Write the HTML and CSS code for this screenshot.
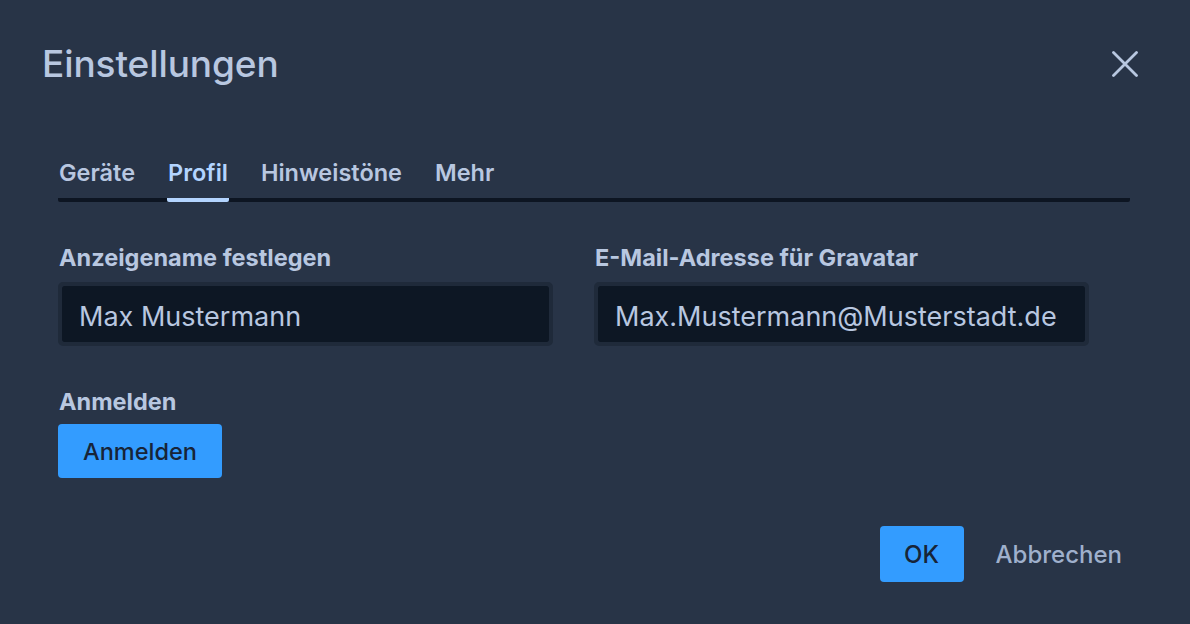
FILE: index.html
```html
<!DOCTYPE html>
<html>
  <head>
    <title>Einstellungen</title>
    <link rel="stylesheet" href="styles.css">
  </head>
  <body>
    <div class="dialog">
      <div class="dialogHeader">
        <h1 class="dialogTitle">Einstellungen</h1>
        <button class="closeButton" aria-label="Schließen">
          <svg width="26" height="26" viewBox="0 0 26 26">
            <path d="M1.5 1.5 L24.5 24.5 M24.5 1.5 L1.5 24.5" stroke="#b8c7e0" stroke-width="2.8" stroke-linecap="round" fill="none"/>
          </svg>
        </button>
      </div>

      <div class="dialogBody">
        <div class="tabs">
          <span class="tab">Geräte</span>
          <span class="tab active">Profil</span>
          <span class="tab">Hinweistöne</span>
          <span class="tab">Mehr</span>
        </div>

        <div class="fields">
          <div class="field">
            <label class="fieldLabel">Anzeigename festlegen</label>
            <div class="inputWrap">
              <input class="textInput" type="text" value="Max Mustermann">
            </div>
          </div>
          <div class="field">
            <label class="fieldLabel">E-Mail-Adresse für Gravatar</label>
            <div class="inputWrap">
              <input class="textInput" type="text" value="Max.Mustermann@Musterstadt.de">
            </div>
          </div>
        </div>

        <div class="loginSection">
          <p class="fieldLabel">Anmelden</p>
          <button class="primaryButton loginButton">Anmelden</button>
        </div>
      </div>

      <div class="dialogFooter">
        <button class="primaryButton okButton">OK</button>
        <button class="subtleButton">Abbrechen</button>
      </div>
    </div>
  </body>
</html>
```

FILE: styles.css
```css
:root {
  --background: rgb(40,52,71);
  --inputbackground: rgb(13,23,36);
  --inputborder: rgb(31,42,58);
  --tabline: rgb(13,21,34);

  --textcolor: rgb(184,199,224);
  --activecolor: rgb(179,212,255);
  --subtlecolor: rgb(159,176,204);

  --buttoncolor: rgb(51,156,255);
  --buttontext: rgb(23,36,56);
}

* {
  box-sizing: border-box;
  font-family: Inter, "Noto Sans", sans-serif;
}

body {
  margin: 0;
  background: var(--background);
  color: var(--textcolor);
}

.dialog {
  width: 1190px;
  height: 624px;
  display: flex;
  flex-direction: column;
}

.dialogHeader {
  display: flex;
  justify-content: space-between;
  align-items: center;
  padding: 38px 52px 0 42px;
}

.dialogTitle {
  margin: 0;
  font-size: 37px;
  font-weight: 500;
  line-height: 52px;
  letter-spacing: -0.1px;
}

.closeButton {
  background: none;
  border: none;
  padding: 0;
  width: 26px;
  height: 26px;
  cursor: pointer;
}

.dialogBody {
  padding: 0 60px 0 58px;
}

.tabs {
  display: flex;
  gap: 31px;
  margin-top: 69px;
  border-bottom: 4px solid var(--tabline);
  border-radius: 2px;
}

.tab {
  font-size: 23.5px;
  font-weight: 600;
  line-height: 28px;
  padding: 0 1px 11px;
  margin-bottom: -4px;
  border-bottom: 4px solid transparent;
  border-radius: 2px;
}

.tab.active {
  color: var(--activecolor);
  border-bottom-color: var(--activecolor);
}

.fields {
  display: flex;
  margin-top: 42px;
}

.field {
  flex: 1;
  padding-right: 41px;
}

.fieldLabel {
  display: block;
  margin: 0 0 10px 1px;
  font-size: 23.5px;
  font-weight: 700;
  line-height: 28px;
}

.inputWrap {
  border: 4px solid var(--inputborder);
  border-radius: 5px;
}

.textInput {
  display: block;
  width: 100%;
  height: 56px;
  border: none;
  border-radius: 2px;
  padding: 4px 17px 0;
  background: var(--inputbackground);
  color: var(--textcolor);
  font-size: 27px;
  outline: none;
}

.loginSection {
  margin-top: 42px;
}

.loginSection .fieldLabel {
  margin-bottom: 8px;
}

.primaryButton {
  border: none;
  border-radius: 4px;
  background: var(--buttoncolor);
  color: var(--buttontext);
  font-size: 23.5px;
  font-weight: 500;
  cursor: pointer;
}

.loginButton {
  width: 164px;
  height: 54px;
}

.dialogFooter {
  display: flex;
  justify-content: flex-end;
  align-items: center;
  gap: 32px;
  margin-top: auto;
  padding: 0 68px 42px 0;
}

.okButton {
  width: 84px;
  height: 56px;
  font-size: 24px;
}

.subtleButton {
  background: none;
  border: none;
  padding: 0;
  color: var(--subtlecolor);
  font-size: 24px;
  font-weight: 500;
  cursor: pointer;
}
```
